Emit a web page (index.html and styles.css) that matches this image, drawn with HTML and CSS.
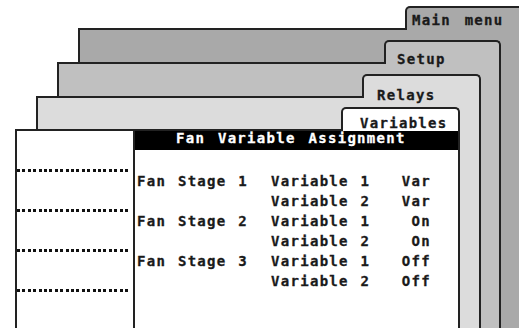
FILE: index.html
```html
<!DOCTYPE html>
<html lang="en">
<head>
<meta charset="utf-8">
<title>Fan Variable Assignment</title>
<link rel="stylesheet" href="styles.css">
</head>
<body>
<div class="stage">
  <section class="layer layer-main">
    <div class="tab tab-main">Main menu</div>
    <div class="sheet"></div>
  </section>
  <section class="layer layer-setup">
    <div class="tab tab-setup">Setup</div>
    <div class="sheet"></div>
  </section>
  <section class="layer layer-relays">
    <div class="tab tab-relays">Relays</div>
    <div class="sheet"></div>
  </section>
  <section class="layer layer-vars">
    <div class="tab tab-vars">Variables</div>
    <div class="sheet sheet-front">
      <div class="slots">
        <div class="sep"></div>
        <div class="sep"></div>
        <div class="sep"></div>
        <div class="sep"></div>
      </div>
      <div class="content">
        <div class="title">Fan Variable Assignment</div>
        <div class="table">
          <span>Fan Stage 1</span><span>Variable 1</span><span class="val">Var</span>
          <span></span><span>Variable 2</span><span class="val">Var</span>
          <span>Fan Stage 2</span><span>Variable 1</span><span class="val">On</span>
          <span></span><span>Variable 2</span><span class="val">On</span>
          <span>Fan Stage 3</span><span>Variable 1</span><span class="val">Off</span>
          <span></span><span>Variable 2</span><span class="val">Off</span>
        </div>
      </div>
    </div>
  </section>
</div>
</body>
</html>
```
FILE: styles.css
```css
html, body {
  margin: 0;
  padding: 0;
  width: 519px;
  height: 328px;
  overflow: hidden;
  background: #fff;
}

.stage {
  position: relative;
  width: 519px;
  height: 328px;
  overflow: hidden;
  font-family: "DejaVu Sans Mono", "Liberation Mono", monospace;
  font-weight: bold;
  font-size: 14px;
  color: #1a1a1a;
  letter-spacing: 1.3px;
  word-spacing: 2px;
  -webkit-text-stroke: 0.3px currentColor;
}

.layer {
  position: absolute;
  display: flex;
  flex-direction: column;
  align-items: flex-end;
  width: 445px;
  height: 420px;
}

.layer-main { left: 78px; top: 6px; --fill: #a9a9a9; }
.layer-setup { left: 57px; top: 40px; width: 444px; --fill: #c0c0c0; }
.layer-relays { left: 36px; top: 74px; --fill: #dcdcdc; }
.layer-vars { left: 15px; top: 107px; --fill: #ffffff; }

.tab {
  box-sizing: border-box;
  height: 24px;
  margin-bottom: -2px;
  position: relative;
  z-index: 1;
  border: 2px solid #222;
  border-bottom: 0;
  border-radius: 5px 5px 0 0;
  background: var(--fill);
  line-height: 16px;
  white-space: nowrap;
}

.tab-main { width: 118px; padding: 4px 0 0 5px; word-spacing: 4px; }
.tab-setup { width: 117px; padding: 9px 0 0 11px; }
.tab-relays { width: 119px; padding: 11px 0 0 13px; }
.tab-vars { width: 119px; padding: 6px 0 0 17px; }

.sheet {
  align-self: stretch;
  flex: 1;
  border: 2px solid #222;
  border-bottom: 0;
  background: var(--fill);
}

.sheet-front {
  display: flex;
}

.slots {
  width: 116px;
  border-right: 2px solid #222;
  padding-top: 38px;
  display: flex;
  flex-direction: column;
  gap: 37px;
}

.sep {
  height: 3px;
  margin-right: 3px;
  background: repeating-linear-gradient(90deg, #111 0 3px, transparent 3px 5.4px);
}

.content {
  flex: 1;
  display: flex;
  flex-direction: column;
}

.title {
  height: 19px;
  box-sizing: border-box;
  background: #000;
  color: #fff;
  line-height: 15px;
  padding-left: 41px;
  word-spacing: 3px;
  white-space: nowrap;
}

.table {
  display: grid;
  grid-template-columns: 134px 120px 40px;
  padding: 21px 0 0 2px;
  line-height: 20px;
  white-space: nowrap;
}

.val {
  text-align: right;
}
```
